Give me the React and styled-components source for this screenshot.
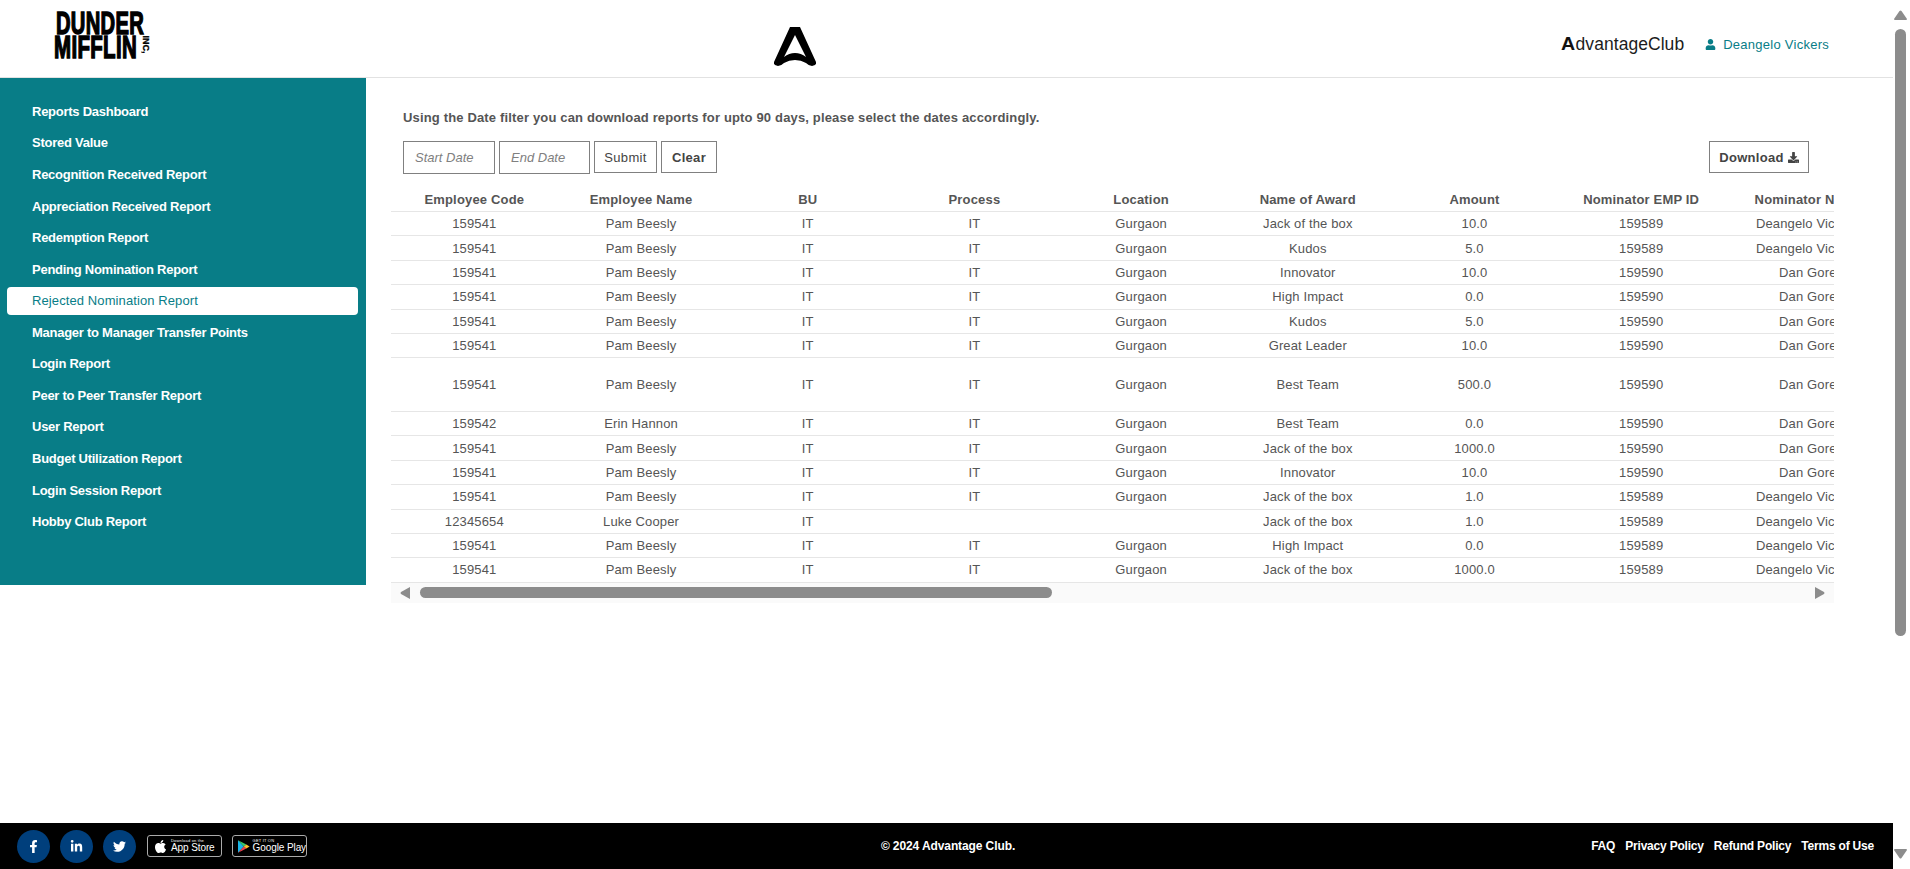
import React from "react";
import styled, { createGlobalStyle } from "styled-components";
import { FaFacebookF, FaLinkedinIn, FaTwitter, FaApple, FaUser, FaDownload } from "react-icons/fa";

const Global = createGlobalStyle`
  html, body { margin: 0; padding: 0; height: 100%; overflow: hidden; background: #fff; }
  * { box-sizing: border-box; }
  body { font-family: "Liberation Sans", Arial, sans-serif; }
`;

const Shell = styled.div`display: flex; width: 1910px; height: 869px;`;
const Page = styled.div`flex: 0 0 1893px; display: flex; flex-direction: column; height: 869px; min-width: 0;`;

const Header = styled.header`
  flex: 0 0 78px; display: flex; align-items: center; border-bottom: 1px solid #e2e2e2; position: relative; padding-right: 64px;
`;
const Brand = styled.div`
  margin-left: 54px; width: 100px; height: 48px; color: #000; font-weight: 700; position: relative; margin-top: -7px;
  font-family: "Liberation Sans", Arial, sans-serif; line-height: 1;
`;
const BrandLine = styled.div`
  font-size: 32px; height: 24px; line-height: 24px; white-space: nowrap; transform-origin: left center;
  transform: scaleX(${p => p.$sx}); margin-left: ${p => p.$ml}px; -webkit-text-stroke: 1.5px #000; letter-spacing: 0.5px;
`;
const BrandInc = styled.span`
  position: absolute; left: 82px; top: 29px; font-size: 9px; transform: rotate(90deg); transform-origin: center; font-weight: 700;
  -webkit-text-stroke: 0.3px #000;
`;
const Mark = styled.svg`position: absolute; left: 773px; top: 25px; width: 44px; height: 44px;`;
const HeaderRight = styled.div`margin-left: auto; display: flex; align-items: center; margin-top: 11px;`;
const ClubName = styled.div`font-size: 17.5px; color: #1c1c1c; letter-spacing: 0.05px; margin-right: 21px; line-height: 20px;`;
const ClubA = styled.span`font-weight: 700; color: #111; font-size: 17.5px; display: inline-block; transform: scaleX(1.12); transform-origin: left; margin-right: 2px;`;
const UserName = styled.div`display: flex; align-items: center; gap: 7px; color: #087d87; font-size: 13px; letter-spacing: 0.26px;`;

const Body = styled.div`flex: 1; display: flex; min-height: 0;`;
const Side = styled.nav`
  flex: 0 0 366px; height: 507px; background: #087d87; padding-top: 15.8px;
`;
const SideItem = styled.a`
  display: flex; align-items: center; height: 28px; margin: 3.57px 8px 3.57px 7px; padding-left: 25px; border-radius: 4px;
  font-size: 13px; font-weight: ${p => (p.$active ? 400 : 700)}; letter-spacing: ${p => (p.$active ? "0.1px" : "-0.26px")};
  color: ${p => (p.$active ? "#087d87" : "#fff")}; background: ${p => (p.$active ? "#fff" : "transparent")};
`;
const Content = styled.main`flex: 1; min-width: 0; padding: 31px 59px 0 25px;`;
const Note = styled.p`
  margin: 0 0 0 12px; font-size: 13px; font-weight: 700; color: #555; line-height: 18px; letter-spacing: 0.16px;
`;
const Filters = styled.div`display: flex; align-items: flex-start; gap: 4px; margin: 14px 0 0 12px; height: 33px; padding-right: 25px;`;
const DateField = styled.div`
  width: ${p => p.$w}px; height: 33px; border: 1px solid #808080; padding-left: 11px; display: flex; align-items: center;
  font-size: 13px; font-style: italic; color: #808080;
`;
const Btn = styled.button`
  width: ${p => p.$w}px; height: 32px; border: 1px solid #808080; background: #fff; color: #444; padding: 0; margin: 0;
  font: ${p => (p.$bold ? 700 : 400)} 13px "Liberation Sans", Arial, sans-serif; letter-spacing: 0.3px; display: flex; align-items: center; justify-content: center; gap: 4px;
`;
const DownloadBtn = styled(Btn)`margin-left: auto; font-weight: 700;`;

const TableWrap = styled.div`width: 1443px; margin-top: 14px; overflow: hidden;`;
const Row = styled.div`
  display: flex; width: 1500px; align-items: center; height: ${p => p.$h}px; border-bottom: 1px solid #e6e6e6;
`;
const Cell = styled.div`
  flex: 0 0 166.7px; text-align: center; white-space: nowrap; font-size: 13px; color: #555; letter-spacing: 0.14px;
`;
const HeadCell = styled(Cell)`font-weight: 700; letter-spacing: 0.18px;`;
const HBar = styled.div`display: flex; align-items: center; height: 20px; background: #fafafa; padding: 0 9px;`;
const HThumb = styled.div`width: 632px; height: 11px; background: #8c8c8c; border-radius: 6px; margin-left: 10px;`;
const Arrow = styled.svg`display: block; flex: none;`;
const HEnd = styled.div`margin-left: auto;`;

const Footer = styled.footer`
  flex: 0 0 46px; background: #000; display: grid; grid-template-columns: 1fr auto 1fr; align-items: center; padding: 0 17px;
`;
const Socials = styled.div`display: flex; align-items: center; gap: 10px;`;
const Circle = styled.span`
  width: 33px; height: 33px; border-radius: 50%; background: #003f7c; color: #fff; display: flex; align-items: center; justify-content: center; font-size: 13px;
`;
const Badge = styled.div`
  width: 75px; height: 22px; border: 1px solid #aaa; border-radius: 3px; color: #fff; display: flex; align-items: center; gap: 3px; padding-left: 5px; white-space: nowrap;
  margin-left: ${p => p.$ml || 0}px;
`;
const BadgeText = styled.div`display: flex; flex-direction: column; line-height: 1;`;
const BadgeSmall = styled.span`font-size: 4px; letter-spacing: 0.2px;`;
const BadgeBig = styled.span`font-size: 10px; letter-spacing: -0.1px;`;
const Copy = styled.div`color: #fff; font-size: 12px; font-weight: 700; margin-left: 3px; letter-spacing: -0.1px;`;
const Links = styled.div`display: flex; justify-content: flex-end; gap: 10px; color: #fff; font-size: 12px; font-weight: 700; letter-spacing: -0.2px; white-space: nowrap; padding-right: 2px;`;

const VBar = styled.div`
  flex: 0 0 17px; height: 869px; display: flex; flex-direction: column; align-items: flex-start; padding: 10px 0 10px 1px; background: #fff;
`;
const VThumb = styled.div`width: 11px; height: 607px; margin: 9px 0 0 1px; background: #8c8c8c; border-radius: 6px;`;
const VEnd = styled.div`margin-top: auto;`;

const menu = ["Reports Dashboard","Stored Value","Recognition Received Report","Appreciation Received Report","Redemption Report","Pending Nomination Report","Rejected Nomination Report","Manager to Manager Transfer Points","Login Report","Peer to Peer Transfer Report","User Report","Budget Utilization Report","Login Session Report","Hobby Club Report"];
const heads = ["Employee Code","Employee Name","BU","Process","Location","Name of Award","Amount","Nominator EMP ID","Nominator Name"];
const D = ["159589","Deangelo Vickers"], G = ["159590","Dan Gore"];
const P = ["159541","Pam Beesly","IT","IT","Gurgaon"];
const rows = [
  [...P,"Jack of the box","10.0",...D],
  [...P,"Kudos","5.0",...D],
  [...P,"Innovator","10.0",...G],
  [...P,"High Impact","0.0",...G],
  [...P,"Kudos","5.0",...G],
  [...P,"Great Leader","10.0",...G],
  [...P,"Best Team","500.0",...G],
  ["159542","Erin Hannon","IT","IT","Gurgaon","Best Team","0.0",...G],
  [...P,"Jack of the box","1000.0",...G],
  [...P,"Innovator","10.0",...G],
  [...P,"Jack of the box","1.0",...D],
  ["12345654","Luke Cooper","IT","","","Jack of the box","1.0",...D],
  [...P,"High Impact","0.0",...D],
  [...P,"Jack of the box","1000.0",...D],
];

export default function App() {
  return (
    <Shell>
      <Global />
      <Page>
        <Header>
          <Brand>
            <BrandLine $sx={0.63} $ml={2}>DUNDER</BrandLine>
            <BrandLine $sx={0.64} $ml={0}>MIFFLIN</BrandLine>
            <BrandInc>INC,</BrandInc>
          </Brand>
          <Mark viewBox="0 0 44 44">
            <path d="M17 2 H27 L43 37 Q43.5 39 42 40 L39 41 Q36 41 33 38 Q28 35 22 35 Q16 35 11 38 Q8 41 5 41 L2 40 Q.5 39 1 37 Z M22 10 L11 32 Q16 28 22 28 Q28 28 33 32 Z" fill="#000" fillRule="evenodd" />
          </Mark>
          <HeaderRight>
            <ClubName><ClubA>A</ClubA>dvantageClub</ClubName>
            <UserName><FaUser size={11} />Deangelo Vickers</UserName>
          </HeaderRight>
        </Header>
        <Body>
          <Side>
            {menu.map(m => <SideItem key={m} $active={m === "Rejected Nomination Report"}>{m}</SideItem>)}
          </Side>
          <Content>
            <Note>Using the Date filter you can download reports for upto 90 days, please select the dates accordingly.</Note>
            <Filters>
              <DateField $w={92}>Start Date</DateField>
              <DateField $w={91}>End Date</DateField>
              <Btn $w={63}>Submit</Btn>
              <Btn $w={56} $bold>Clear</Btn>
              <DownloadBtn $w={100}>Download <FaDownload size={11} /></DownloadBtn>
            </Filters>
            <TableWrap>
              <Row $h={24}>{heads.map(h => <HeadCell key={h}>{h}</HeadCell>)}</Row>
              {rows.map((r, i) => (
                <Row key={i} $h={i === 6 ? 53.6 : 24.4}>{r.map((c, j) => <Cell key={j}>{c}</Cell>)}</Row>
              ))}
              <HBar>
                <Arrow width="10" height="12" viewBox="0 0 10 12"><path d="M10 0 V12 L1 7 Q0 6 1 5 Z" fill="#8c8c8c" /></Arrow>
                <HThumb />
                <HEnd />
                <Arrow width="10" height="12" viewBox="0 0 10 12"><path d="M0 0 V12 L9 7 Q10 6 9 5 Z" fill="#8c8c8c" /></Arrow>
              </HBar>
            </TableWrap>
          </Content>
        </Body>
        <Footer>
          <Socials>
            <Circle><FaFacebookF /></Circle>
            <Circle><FaLinkedinIn /></Circle>
            <Circle><FaTwitter /></Circle>
            <Badge $ml={1}><FaApple size={15} /><BadgeText><BadgeSmall>Download on the</BadgeSmall><BadgeBig>App Store</BadgeBig></BadgeText></Badge>
            <Badge>
              <svg width="14" height="15" viewBox="0 0 14 15">
                <path d="M0 0 L7 7.5 L0 15 Z" fill="#19b5e8" />
                <path d="M0 0 L10 5 L7 7.5 Z" fill="#39c96b" />
                <path d="M0 15 L10 10 L7 7.5 Z" fill="#ec4250" />
                <path d="M10 5 L14 7.5 L10 10 L7 7.5 Z" fill="#fbc02d" />
              </svg>
              <BadgeText><BadgeSmall>GET IT ON</BadgeSmall><BadgeBig>Google Play</BadgeBig></BadgeText>
            </Badge>
          </Socials>
          <Copy>© 2024 Advantage Club.</Copy>
          <Links><span>FAQ</span><span>Privacy Policy</span><span>Refund Policy</span><span>Terms of Use</span></Links>
        </Footer>
      </Page>
      <VBar>
        <Arrow width="13" height="10" viewBox="0 0 13 10"><path d="M0 9 L5.5 1 Q6.5 0 7.5 1 L13 9 Q13 10 12 10 H1 Q0 10 0 9 Z" fill="#8c8c8c" /></Arrow>
        <VThumb />
        <VEnd />
        <Arrow width="13" height="10" viewBox="0 0 13 10"><path d="M0 1 L5.5 9 Q6.5 10 7.5 9 L13 1 Q13 0 12 0 H1 Q0 0 0 1 Z" fill="#8c8c8c" /></Arrow>
      </VBar>
    </Shell>
  );
}
